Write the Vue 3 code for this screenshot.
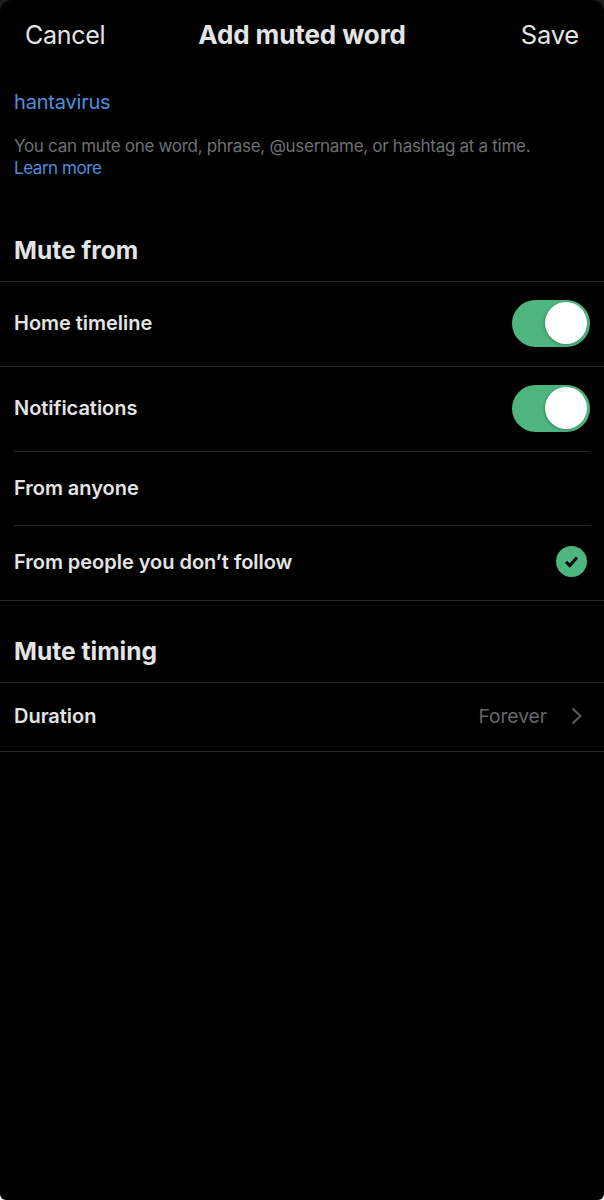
<script setup>
const toggles = [
  { label: 'Home timeline', inset: false },
  { label: 'Notifications', inset: true }
]
</script>

<template>
  <div class="frame">
    <div class="page">
      <header class="header">
        <span class="action">Cancel</span>
        <span class="title">Add muted word</span>
        <span class="action save">Save</span>
      </header>

      <div class="word">hantavirus</div>
      <p class="help">
        You can mute one word, phrase, @username, or hashtag at a time.<br />
        <span class="link">Learn more</span>
      </p>

      <h2 class="section first">Mute from</h2>
      <div v-for="t in toggles" :key="t.label" class="row toggle-row" :class="{ inset: t.inset }">
        <span class="label">{{ t.label }}</span>
        <span class="switch"><span class="knob"></span></span>
      </div>
      <div class="row inset anyone">
        <span class="label">From anyone</span>
      </div>
      <div class="row following">
        <span class="label">From people you don’t follow</span>
        <svg class="check" width="31" height="31" viewBox="0 0 32 32">
          <circle cx="16" cy="16" r="16" fill="#4fb57f" />
          <path d="M10.4 16.4l3.8 3.8 7.4-8.4" fill="none" stroke="#050505" stroke-width="3" />
        </svg>
      </div>

      <h2 class="section second">Mute timing</h2>
      <div class="row duration">
        <span class="label">Duration</span>
        <span class="value">
          Forever
          <svg width="14" height="20" viewBox="0 0 14 20">
            <path d="M2.5 2.5L10.5 10l-8 7.5" fill="none" stroke="#5c5f62" stroke-width="2" />
          </svg>
        </span>
      </div>
    </div>
  </div>
</template>

<style>
html, body { margin: 0; background: #000; }
</style>

<style scoped>
.frame {
  width: 604px;
  height: 1200px;
  background: linear-gradient(#1d1d1d 0 50%, #fff 50%);
}
.page {
  width: 604px;
  height: 1200px;
  box-sizing: border-box;
  background: #000;
  color: #e4e4e4;
  font-family: Inter, "Liberation Sans", sans-serif;
  overflow: hidden;
  border-radius: 12px 12px 6px 6px;
}
.header {
  height: 70px;
  box-sizing: border-box;
  padding: 0 25px 1px;
  display: grid;
  grid-template-columns: 1fr auto 1fr;
  align-items: center;
}
.action { font-size: 25px; font-weight: 400; letter-spacing: -0.3px; }
.save { text-align: right; font-size: 25.5px; letter-spacing: -0.2px; }
.title { font-size: 26px; font-weight: 700; letter-spacing: -0.1px; }
.word {
  margin: 19px 14px 0;
  height: 26px;
  line-height: 26px;
  font-size: 20px;
  letter-spacing: -0.2px;
  color: #4d8fdf;
}
.help {
  margin: 20px 14px 0;
  font-size: 17px;
  letter-spacing: -0.29px;
  line-height: 22px;
  color: #6d7074;
}
.link { color: #4d8fdf; letter-spacing: -0.45px; }
.section {
  margin: 0;
  padding: 0 14px;
  font-weight: 700;
  color: #e4e4e4;
  display: flex;
  align-items: center;
  border-bottom: 1px solid #26282a;
  box-sizing: border-box;
}
.section.first { margin-top: 37px; height: 66px; padding-top: 3px; font-size: 24.6px; }
.section.second { height: 82px; padding-top: 18px; font-size: 24.6px; }
.row {
  display: flex;
  align-items: center;
  justify-content: space-between;
  padding: 0 14px;
  border-bottom: 1px solid #26282a;
  box-sizing: border-box;
}
.inset { margin: 0 14px; padding: 0; }
.toggle-row { height: 85px; }
.anyone { height: 74px; }
.following { height: 75px; }
.duration { height: 69px; }
.label {
  font-size: 20px;
  font-weight: 600;
  letter-spacing: -0.03px;
  padding-bottom: 2px;
}
.switch {
  width: 78px;
  height: 47px;
  margin-bottom: 2px;
  border-radius: 24px;
  background: #4fb57f;
  display: flex;
  justify-content: flex-end;
  align-items: center;
  padding-right: 3px;
  box-sizing: border-box;
}
.knob {
  width: 42px;
  height: 42px;
  border-radius: 50%;
  background: #fff;
  box-shadow: -1px 1px 3px rgba(0, 0, 0, 0.25);
}
.check { margin: 0 3px 3px 0; }
.value {
  display: flex;
  align-items: center;
  gap: 23px;
  margin-right: 6px;
  padding-bottom: 2px;
  font-size: 19.2px;
  color: #65686b;
}
</style>
